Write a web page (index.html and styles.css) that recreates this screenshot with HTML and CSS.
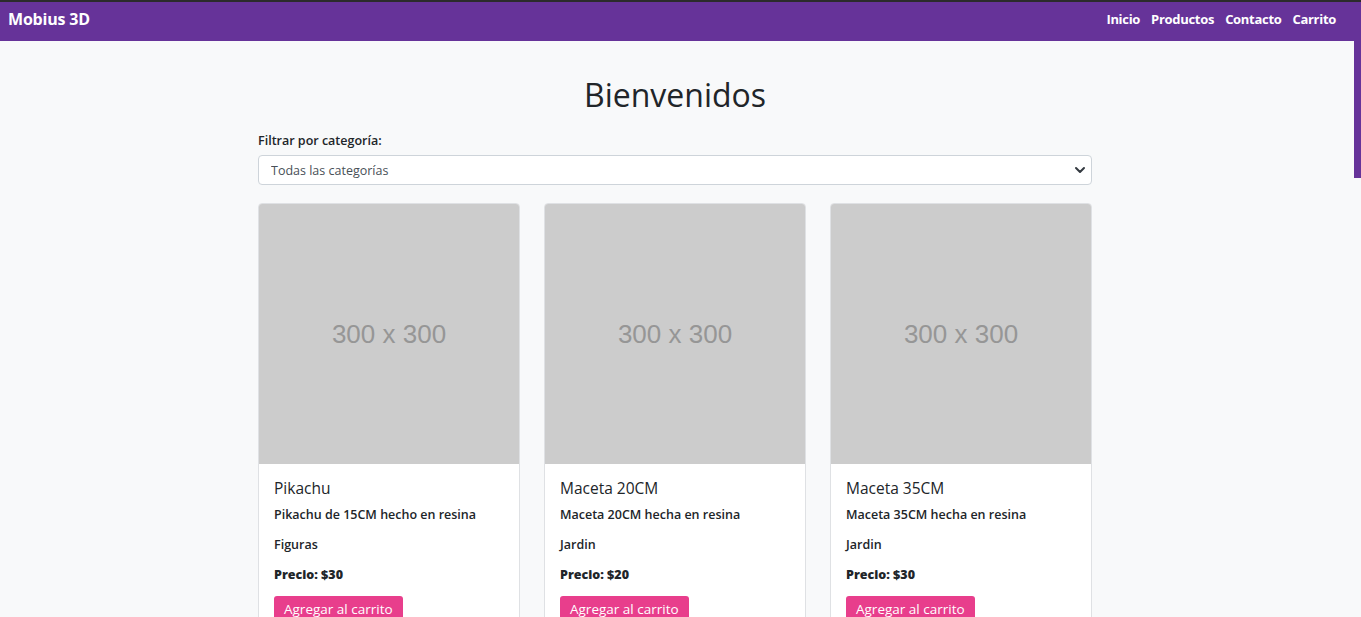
FILE: index.html
```html
<!DOCTYPE html>
<html lang="es">
<head>
<meta charset="utf-8">
<title>Mobius 3D</title>
<link rel="stylesheet" href="styles.css">
</head>
<body>
<div class="page">
<header class="navbar">
  <a class="brand" href="#">Mobius 3D</a>
  <nav class="nav-links">
    <a href="#">Inicio</a>
    <a href="#">Productos</a>
    <a href="#">Contacto</a>
    <a href="#">Carrito</a>
  </nav>
</header>
<main class="container">
  <h1 class="title">Bienvenidos</h1>
  <label class="filter-label" for="cat">Filtrar por categoría:</label>
  <div class="select-wrap">
    <select id="cat" class="select">
      <option>Todas las categorías</option>
      <option>Figuras</option>
      <option>Jardin</option>
    </select>
    <svg class="chev" width="12" height="10" viewBox="0 0 12 10"><path d="M2 3l4 4 4-4" fill="none" stroke="#343a40" stroke-width="2" stroke-linecap="round" stroke-linejoin="round"/></svg>
  </div>
  <section class="grid">
    <article class="card">
      <div class="ph">300 x 300</div>
      <div class="card-body">
        <h2 class="card-title">Pikachu</h2>
        <p class="desc">Pikachu de 15CM hecho en resina</p>
        <p class="cat">Figuras</p>
        <p class="price">Precio: $30</p>
        <button class="btn">Agregar al carrito</button>
      </div>
    </article>
    <article class="card">
      <div class="ph">300 x 300</div>
      <div class="card-body">
        <h2 class="card-title">Maceta 20CM</h2>
        <p class="desc">Maceta 20CM hecha en resina</p>
        <p class="cat">Jardin</p>
        <p class="price">Precio: $20</p>
        <button class="btn">Agregar al carrito</button>
      </div>
    </article>
    <article class="card">
      <div class="ph">300 x 300</div>
      <div class="card-body">
        <h2 class="card-title">Maceta 35CM</h2>
        <p class="desc">Maceta 35CM hecha en resina</p>
        <p class="cat">Jardin</p>
        <p class="price">Precio: $30</p>
        <button class="btn">Agregar al carrito</button>
      </div>
    </article>
  </section>
</main>
</div>
<aside class="scroll-rail"><div class="scroll-thumb"></div></aside>
</body>
</html>
```
FILE: styles.css
```css
* { box-sizing: border-box; }

html, body { height: 100%; }

body {
  margin: 0;
  background: #f8f9fa;
  color: #212529;
  font-family: "Open Sans", "Noto Sans", sans-serif;
  border-top: 2px solid #2b2b2b;
  display: flex;
  overflow: hidden;
}

.page { flex: 1; min-width: 0; }

.scroll-rail { width: 7px; flex: none; background: #f8f9fa; }
.scroll-thumb { height: 176px; background: #663399; }

.navbar {
  background: #663399;
  height: 39px;
  display: flex;
  align-items: center;
  justify-content: space-between;
  padding: 0 18px 5px 8px;
}
.brand {
  color: #fff;
  text-decoration: none;
  font-weight: 700;
  font-size: 16px;
  letter-spacing: -0.2px;
}
.nav-links { display: flex; gap: 11px; }
.nav-links a {
  color: #fff;
  text-decoration: none;
  font-weight: 700;
  font-size: 13px;
  letter-spacing: -0.3px;
}

.container {
  width: 834px;
  margin: 0 auto;
  padding: 34px 0 80px;
  transform: translateX(-2px);
}
.title {
  margin: 0 0 17px;
  text-align: center;
  font-weight: 400;
  font-size: 32px;
  line-height: 40px;
}
.filter-label {
  display: block;
  font-size: 12.5px;
  font-weight: 600;
  margin-bottom: 6px;
}
.select-wrap { position: relative; margin-bottom: 18px; }
.select {
  width: 100%;
  height: 30px;
  appearance: none;
  -webkit-appearance: none;
  background: #fff;
  border: 1px solid #ced4da;
  border-radius: 4px;
  padding: 0 12px;
  font-family: inherit;
  font-size: 12.5px;
  color: #495057;
}
.chev { position: absolute; right: 6px; top: 10px; pointer-events: none; }

.grid {
  display: grid;
  grid-template-columns: repeat(3, 1fr);
  gap: 24px;
}
.card {
  background: #fff;
  border: 1px solid #dfe1e4;
  border-radius: 4px;
  overflow: hidden;
}
.ph {
  height: 260px;
  background: #cccccc;
  color: #969696;
  display: flex;
  align-items: center;
  justify-content: center;
  font-family: "Liberation Sans", Arial, sans-serif;
  font-size: 26px;
}
.card-body { padding: 14px 15px 16px; }
.card-title {
  margin: 0 0 8px;
  font-size: 15.5px;
  font-weight: 400;
  line-height: 20px;
}
.desc, .cat, .price {
  margin: 0 0 12px;
  font-size: 12.5px;
  line-height: 18px;
  font-weight: 600;
}
.price { font-weight: 800; margin-bottom: 12px; }
.btn {
  background: #e83e8c;
  color: #fff;
  border: none;
  border-radius: 3px;
  font-family: inherit;
  font-size: 13.5px;
  padding: 4px 10px;
  line-height: 18px;
}
```
